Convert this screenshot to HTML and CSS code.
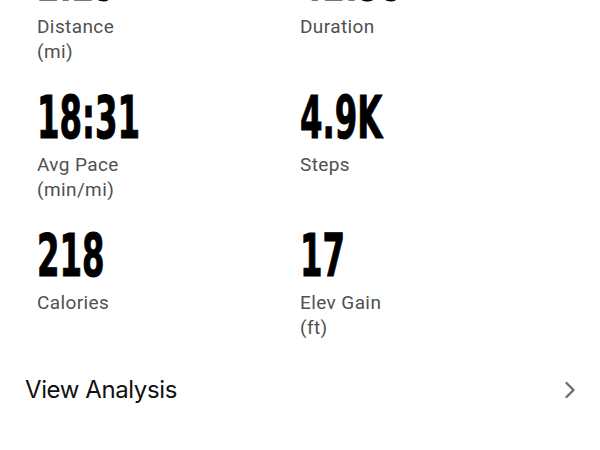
FILE: index.html
```html
<!DOCTYPE html>
<html lang="en">
<head>
<meta charset="utf-8">
<title>Activity Stats</title>
<link rel="stylesheet" href="styles.css">
</head>
<body>
<main class="screen">
  <section class="stats">
    <div class="stat">
      <div class="value">2.29</div>
      <div class="label">Distance<br>(mi)</div>
    </div>
    <div class="stat">
      <div class="value">42:35</div>
      <div class="label">Duration</div>
    </div>
    <div class="stat">
      <div class="value">18:31</div>
      <div class="label">Avg Pace<br>(min/mi)</div>
    </div>
    <div class="stat">
      <div class="value">4.9K</div>
      <div class="label">Steps</div>
    </div>
    <div class="stat">
      <div class="value">218</div>
      <div class="label">Calories</div>
    </div>
    <div class="stat">
      <div class="value">17</div>
      <div class="label">Elev Gain<br>(ft)</div>
    </div>
  </section>
  <a class="analysis" href="#">
    <span class="analysis-text">View Analysis</span>
    <svg class="chevron" width="12" height="18" viewBox="0 0 12 18" aria-hidden="true">
      <path d="M2.5 2 L9.5 9 L2.5 16" fill="none" stroke="#6e6e6e" stroke-width="2.4" stroke-linecap="round" stroke-linejoin="round"/>
    </svg>
  </a>
</main>
</body>
</html>
```
FILE: styles.css
```css
html, body {
  margin: 0;
  padding: 0;
  background: #ffffff;
}

.screen {
  width: 600px;
  height: 450px;
  overflow: hidden;
}

.stats {
  display: grid;
  grid-template-columns: 263px 1fr;
  row-gap: 30px;
  padding-left: 37px;
  margin-top: -42px;
}

.stat {
  display: flex;
  flex-direction: column;
  align-items: flex-start;
  height: 108px;
}

.value {
  font-family: "DejaVu Sans Condensed", "DejaVu Sans", sans-serif;
  font-weight: 700;
  font-size: 58px;
  line-height: 44px;
  height: 44px;
  letter-spacing: 0;
  color: #000000;
  -webkit-text-stroke: 1px #000000;
  transform: scaleX(0.62);
  transform-origin: left center;
  white-space: nowrap;
}

.label {
  margin-top: 12px;
  font-family: Roboto, "Liberation Sans", sans-serif;
  font-size: 19px;
  line-height: 25px;
  letter-spacing: 0.4px;
  color: #505050;
}

.analysis {
  display: flex;
  align-items: center;
  justify-content: space-between;
  margin-top: 33px;
  padding: 0 24px 0 25px;
  height: 30px;
  text-decoration: none;
}

.analysis-text {
  font-family: Inter, "Liberation Sans", sans-serif;
  font-size: 24px;
  line-height: 30px;
  color: #111111;
  letter-spacing: -0.4px;
}

.chevron {
  display: block;
}
```
